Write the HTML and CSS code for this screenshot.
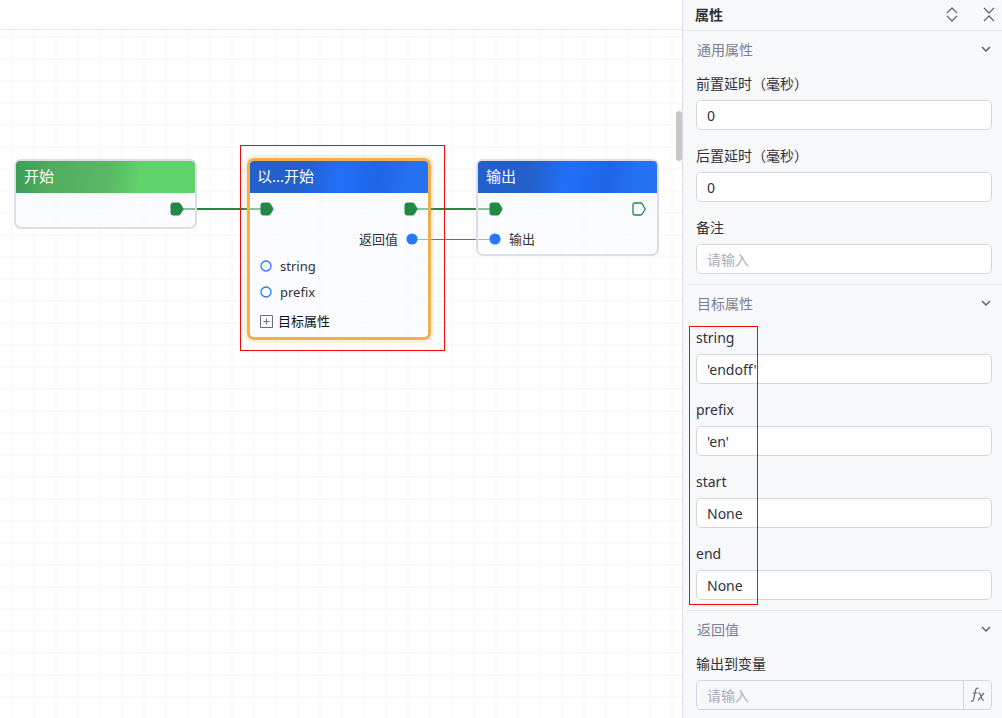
FILE: index.html
```html
<!DOCTYPE html>
<html lang="zh-CN">
<head>
<meta charset="utf-8">
<title>属性</title>
<link rel="stylesheet" href="styles.css">
</head>
<body>
<svg class="defs" aria-hidden="true">
  <symbol id="pin" viewBox="0 0 14 14"><path d="M3 1H8.6Q9.6 1 10.2 1.8L13.2 7L10.2 12.2Q9.6 13 8.6 13H3Q1 13 1 11V3Q1 1 3 1Z"/></symbol>
  <symbol id="dot" viewBox="0 0 12 12"><circle cx="6" cy="6" r="5"/></symbol>
  <symbol id="chevron" viewBox="0 0 12 12"><path d="M2 4L6 8L10 4"/></symbol>
</svg>
<div class="app">
  <main class="workspace">
    <div class="toolbar"></div>
    <div class="canvas">
      <svg class="wires" aria-hidden="true">
        <path class="wire-flow" d="M180 179H264M414 179H492"/>
        <path class="wire-data" d="M412 209.5H495"/>
      </svg>

      <section class="node node-start">
        <h2 class="node-title title-green">开始</h2>
        <div class="row row-flow row-end"><svg class="pin"><use href="#pin"/></svg></div>
      </section>

      <section class="node node-active">
        <h2 class="node-title title-blue">以...开始</h2>
        <div class="row row-flow"><svg class="pin"><use href="#pin"/></svg><svg class="pin"><use href="#pin"/></svg></div>
        <div class="row row-value row-end"><span>返回值</span><svg class="dot"><use href="#dot"/></svg></div>
        <div class="row row-param"><svg class="dot hollow"><use href="#dot"/></svg><span>string</span></div>
        <div class="row row-param"><svg class="dot hollow"><use href="#dot"/></svg><span>prefix</span></div>
        <button class="row row-more" type="button">
          <svg class="plus" viewBox="0 0 13 13"><path d="M.5 .5H12.5V12.5H.5ZM3.5 6.5H9.5M6.5 3.5V9.5"/></svg>
          <span>目标属性</span>
        </button>
      </section>

      <section class="node node-output">
        <h2 class="node-title title-blue">输出</h2>
        <div class="row row-flow"><svg class="pin"><use href="#pin"/></svg><svg class="pin hollow"><use href="#pin"/></svg></div>
        <div class="row row-value"><svg class="dot"><use href="#dot"/></svg><span>输出</span></div>
      </section>

      <div class="mark mark-node"></div>
      <div class="scroll-thumb"></div>
    </div>
  </main>

  <aside class="panel">
    <header class="panel-head">
      <h1>属性</h1>
      <button class="icon-button" type="button" aria-label="全部展开"><svg class="fold" viewBox="0 0 12 16"><path d="M1 6L6 1L11 6M1 9L6 14L11 9"/></svg></button>
      <button class="icon-button" type="button" aria-label="全部折叠"><svg class="fold" viewBox="0 0 12 16"><path d="M1 1L6 6L11 1M1 14L6 9L11 14"/></svg></button>
    </header>

    <section class="group">
      <button class="group-head" type="button"><span>通用属性</span><svg class="chevron"><use href="#chevron"/></svg></button>
      <div class="fields">
        <div class="field"><label for="before">前置延时（毫秒）</label><input id="before" type="text" value="0"></div>
        <div class="field"><label for="after">后置延时（毫秒）</label><input id="after" type="text" value="0"></div>
        <div class="field"><label for="note">备注</label><input id="note" type="text" placeholder="请输入"></div>
      </div>
    </section>

    <section class="group">
      <button class="group-head" type="button"><span>目标属性</span><svg class="chevron"><use href="#chevron"/></svg></button>
      <div class="fields">
        <div class="field"><label for="string">string</label><input id="string" type="text" value="'endoff'"></div>
        <div class="field"><label for="prefix">prefix</label><input id="prefix" type="text" value="'en'"></div>
        <div class="field"><label for="start">start</label><input id="start" type="text" value="None"></div>
        <div class="field"><label for="end">end</label><input id="end" type="text" value="None"></div>
        <div class="mark mark-fields"></div>
      </div>
    </section>

    <section class="group">
      <button class="group-head" type="button"><span>返回值</span><svg class="chevron"><use href="#chevron"/></svg></button>
      <div class="fields">
        <div class="field">
          <label for="target">输出到变量</label>
          <div class="input-group">
            <input id="target" type="text" placeholder="请输入">
            <button type="button" aria-label="fx"><svg class="fx" viewBox="0 0 16 16"><path d="M8.6 1.6Q6.4 .3 5.6 3L3.6 12.3Q2.9 15 .9 13.9M2.6 6H7.4M8.4 6.2Q9.6 5.6 10.2 7L12 12Q12.6 13.6 14 13M14 6L8 13.4"/></svg></button>
          </div>
        </div>
      </div>
    </section>
  </aside>
</div>
</body>
</html>
```
FILE: styles.css
```css
* { box-sizing: border-box; }

body {
  margin: 0;
  color: #303238;
  background: #fff;
  font-family: "Noto Sans", "Noto Sans CJK SC", sans-serif;
  font-size: 14px;
}

h1, h2 { margin: 0; }

button, input {
  font: inherit;
  color: inherit;
}

button {
  padding: 0;
  border: 0;
  background: none;
  cursor: pointer;
}

svg {
  display: block;
  flex: none;
}

.defs {
  position: absolute;
  width: 0;
  height: 0;
}

.app {
  display: flex;
  height: 100vh;
  overflow: hidden;
}

.workspace {
  display: flex;
  flex: 1;
  flex-direction: column;
  min-width: 0;
}

.toolbar {
  flex: none;
  height: 30px;
  border-bottom: 1px solid #e8e8ea;
}

.canvas {
  position: relative;
  flex: 1;
  overflow: hidden;
  background-image:
    linear-gradient(to right, #fafafa 2px, transparent 2px),
    linear-gradient(to bottom, #fafafa 2px, transparent 2px);
  background-size: 22px 22px;
  background-position: 11px 6px;
}

.wires {
  position: absolute;
  inset: 0;
  width: 100%;
  height: 100%;
}

.wire-flow { stroke: #238843; stroke-width: 2; }
.wire-data { stroke: #2878ff; stroke-width: 1; }

/* Nodes on the free canvas */
.node {
  position: absolute;
  width: 183px;
  padding-bottom: 1px;
  border: 2px solid #dcdde5;
  border-radius: 7px;
  background: rgba(245, 249, 255, .5);
  font-size: 13px;
}

.node-start { left: 14px; top: 129px; padding-bottom: 2px; }
.node-output { left: 476px; top: 129px; }

.node-active {
  left: 247px;
  top: 128px;
  width: 184px;
  padding-bottom: 0;
  border: 3px solid #f1af4f;
  box-shadow: 0 0 0 3px rgba(241, 175, 79, .2);
}

.node-title {
  height: 32px;
  padding: 0 8px;
  border-radius: 4px 4px 0 0;
  color: #fff;
  font-size: 15px;
  font-weight: 400;
  line-height: 30px;
}

.node-active .node-title { padding: 0 7px; }

.title-green { background: linear-gradient(100deg, #3a9e58, #51ac5f 20%, #58b962 52%, #61d16c 68%); }
.title-blue { background: linear-gradient(100deg, #2360cb 30%, #2270f8 50%, #1d66e7 72%, #2672f3 88%); }

.row {
  display: flex;
  align-items: center;
  gap: 8px;
  width: 100%;
  padding: 0 10px;
  line-height: 18px;
}

.row-flow { justify-content: space-between; height: 32px; }
.row-value { height: 28px; }
.row-param { height: 26px; }
.row-more { gap: 5px; height: 32px; color: #111; }
.row.row-end { justify-content: flex-end; }

.node-start .row,
.node-output .row { padding: 0 11px; }

.pin {
  width: 14px;
  height: 14px;
  fill: #238843;
  stroke: #238843;
}

.dot {
  width: 12px;
  height: 12px;
  fill: #2878ff;
  stroke: #2878ff;
  stroke-width: 1.2;
}

.hollow { fill: #fbfcff; stroke-width: 1.3; }

.plus {
  width: 13px;
  height: 13px;
  fill: none;
  stroke: #6b6d7c;
}

.mark {
  position: absolute;
  border: 1px solid #f80808;
  pointer-events: none;
}

.mark-node {
  left: 240px;
  top: 115px;
  width: 205px;
  height: 206px;
}

.mark-fields {
  left: -7px;
  top: 4px;
  width: 69px;
  height: 279px;
}

.scroll-thumb {
  position: absolute;
  top: 81px;
  right: 0;
  width: 6px;
  height: 50px;
  border-radius: 3px;
  background: #c8c8ca;
}

/* Property panel */
.panel {
  flex: none;
  width: 320px;
  border-left: 1px solid #dddee6;
  background: #f7f8fa;
}

.panel-head {
  display: flex;
  align-items: center;
  gap: 25px;
  height: 30px;
  padding: 0 7px 0 12px;
}

.panel-head h1 {
  flex: 1;
  font-size: 14px;
  font-weight: 700;
  line-height: 20px;
}

.icon-button { display: flex; }

.fold {
  width: 12px;
  height: 16px;
  fill: none;
  stroke: #626a7e;
  stroke-width: 1.3;
}

.group {
  margin-left: 4px;
  padding-left: 9px;
  padding-right: 10px;
  border-top: 1px solid #e8e9ed;
}

.panel-head + .group {
  margin-left: 0;
  padding-left: 13px;
}

.group-head {
  display: flex;
  align-items: center;
  justify-content: space-between;
  width: 100%;
  height: 37px;
  padding-bottom: 2px;
  padding-left: 1px;
  color: #7b7f92;
}

.chevron {
  width: 12px;
  height: 12px;
  fill: none;
  stroke: #5c6068;
  stroke-width: 1.5;
}

.fields { position: relative; }
.field { padding-bottom: 10px; }

.field label {
  display: block;
  height: 32px;
  line-height: 32px;
}

.field input {
  display: block;
  width: 100%;
  height: 30px;
  padding: 0 10px;
  border: 1px solid #d3d5e0;
  border-radius: 5px;
  outline: 0;
  background: #fff;
}

.field input::placeholder { color: #a9adba; }

.field .input-group {
  display: flex;
  height: 30px;
  border: 1px solid #d3d5e0;
  border-radius: 5px;
}

.field .input-group input {
  flex: 1;
  min-width: 0;
  height: 28px;
  border: 0;
  background: none;
}

.input-group button {
  display: flex;
  align-items: center;
  justify-content: center;
  width: 28px;
  border-left: 1px solid #d3d5e0;
}

.fx {
  width: 16px;
  height: 16px;
  fill: none;
  stroke: #666a7c;
  stroke-width: 1.2;
}
```
